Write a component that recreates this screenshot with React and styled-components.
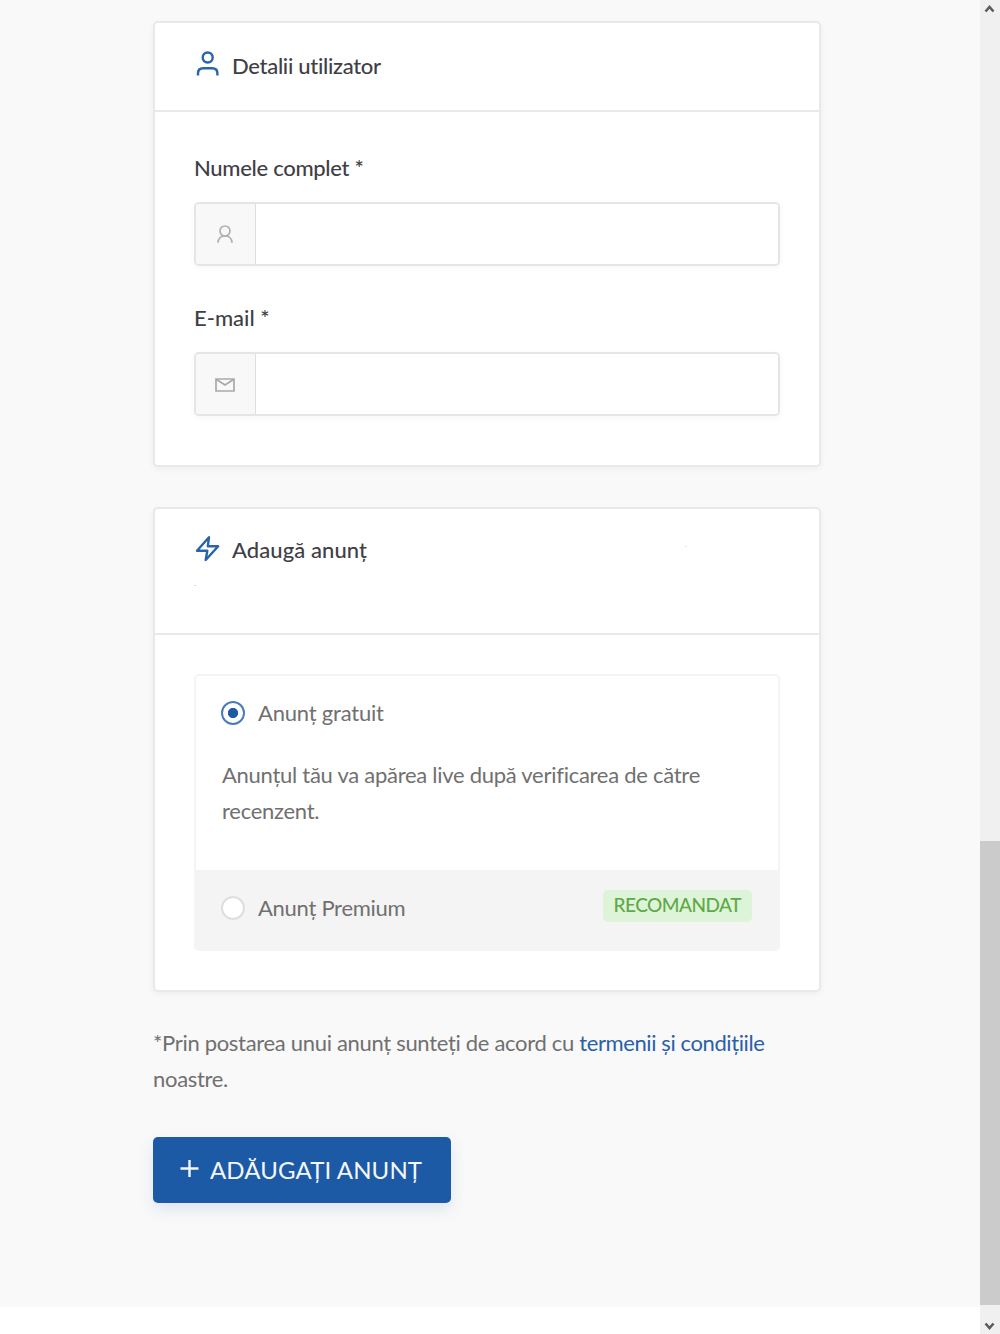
import { useState } from 'react';
import styled, { createGlobalStyle } from 'styled-components';

const GlobalStyle = createGlobalStyle`
  * {
    box-sizing: border-box;
  }

  body {
    margin: 0;
    background: #ffffff;
    color: #707070;
    font-family: Lato, 'Noto Sans', sans-serif;
    font-size: 22px;
    line-height: 36px;
    overflow: hidden;
  }
`;

const Window = styled.div`
  display: flex;
  height: 1334px;
`;

const Page = styled.main`
  flex: 1;
  height: 1307px;
  padding: 21px 159px 0 153px;
  background: #f9f9f9;
`;

const Card = styled.section`
  height: ${({ $height }) => $height}px;
  margin-bottom: ${({ $gap }) => $gap || 40}px;
  background: #ffffff;
  border: 2px solid #e9e9e9;
  border-radius: 5px;
  box-shadow: 0 2px 6px rgba(0, 0, 0, 0.05);
`;

const CardHeader = styled.header`
  position: relative;
  height: ${({ $height }) => $height}px;
  padding: ${({ $top }) => $top}px 39px 0;
  border-bottom: 2px solid #e9e9e9;
`;

const Heading = styled.h3`
  display: flex;
  align-items: center;
  gap: 10px;
  margin: 0;
  color: #3f3f46;
  font-size: 22px;
  font-weight: 500;
  letter-spacing: ${({ $spacing }) => $spacing || 0}px;
  line-height: 38px;

  svg {
    width: 28px;
    height: 28px;
    margin-bottom: 4px;
    stroke: #2a62ab;
  }
`;

const Speck = styled.i`
  position: absolute;
  left: ${({ $x }) => $x}px;
  top: ${({ $y }) => $y}px;
  width: 2px;
  height: 1px;
  background: ${({ $color }) => $color};
`;

const CardBody = styled.div`
  padding: ${({ $top }) => $top}px 39px 0;
`;

const Field = styled.label`
  display: block;
  margin-bottom: 34px;
`;

const FieldLabel = styled.span`
  display: block;
  margin-bottom: 16px;
  color: #3f3f46;
  font-weight: 500;
  letter-spacing: ${({ $spacing }) => $spacing || 0}px;
`;

const InputGroup = styled.span`
  display: flex;
  height: 64px;
  border: 2px solid #e5e5e5;
  border-radius: 5px;
  box-shadow: 0 2px 6px rgba(0, 0, 0, 0.04);
  overflow: hidden;
`;

const InputIcon = styled.span`
  display: flex;
  width: 60px;
  align-items: center;
  justify-content: center;
  padding-right: 2px;
  background: #f8f8f8;
  border-right: 1px solid #dedede;
`;

const Input = styled.input`
  flex: 1;
  min-width: 0;
  padding: 0 20px;
  background: #ffffff;
  border: none;
  outline: none;
  color: #707070;
  font: inherit;
`;

const Plans = styled.div`
  height: 277px;
  border: 2px solid #f4f4f4;
  border-radius: 5px;
  overflow: hidden;
`;

const Plan = styled.div`
  display: flex;
  flex-wrap: wrap;
  align-content: flex-start;
  align-items: flex-start;
  justify-content: space-between;
  height: ${({ $height }) => $height}px;
  padding: ${({ $muted }) => ($muted ? 20 : 19)}px 26px 0;
  background: ${({ $muted }) => ($muted ? '#f4f4f4' : '#ffffff')};
`;

const RadioLabel = styled.label`
  display: flex;
  align-items: center;
  gap: 13px;
  margin-left: -1px;
  letter-spacing: ${({ $spacing }) => $spacing || 0}px;
`;

const Radio = styled.input`
  appearance: none;
  width: 24px;
  height: 24px;
  margin: 0;
  background: #ffffff;
  border: 2px solid #dedede;
  border-radius: 50%;

  &:checked {
    background: radial-gradient(circle, #1d5aa5 4.7px, #ffffff 5.5px);
    border-color: #4a7cb8;
  }
`;

const PlanText = styled.p`
  width: 100%;
  margin: 26px 0 0;
  letter-spacing: -0.27px;
`;

const Badge = styled.span`
  height: 32px;
  padding: 0 11px;
  background: #def4d8;
  border-radius: 5px;
  color: #5fa948;
  font-size: 19px;
  font-weight: 500;
  letter-spacing: -0.5px;
  line-height: 30px;
`;

const Terms = styled.p`
  margin: 0 0 40px;
  letter-spacing: -0.31px;
`;

const TermsLink = styled.a`
  color: #2960a8;
  letter-spacing: -0.4px;
  text-decoration: none;
`;

const SubmitButton = styled.button`
  display: flex;
  width: 298px;
  height: 66px;
  align-items: center;
  padding: 0 27px 2px;
  gap: 10px;
  background: #1d5aa5;
  border: none;
  border-radius: 5px;
  box-shadow: 0 6px 16px rgba(29, 90, 165, 0.13);
  color: #f4f7fb;
  font-family: inherit;
  font-size: 24px;
  letter-spacing: 0.12px;
  white-space: nowrap;
  cursor: pointer;
`;

const Scrollbar = styled.div`
  display: flex;
  width: 20px;
  flex-direction: column;
  background: #f0f0f0;

  svg {
    flex: none;
  }
`;

const Thumb = styled.div`
  height: 464px;
  margin: 821px 0 auto;
  background: #cbcbcb;
`;

function UserIcon() {
  return (
    <svg viewBox="0 0 28 28" fill="none" strokeWidth="2.4">
      <circle cx="13.7" cy="7.5" r="5" />
      <path d="M4 25.500v-2.200c0-3.400 2-5 5.200-5h9c3.200 0 5.200 1.600 5.200 5v2.200" />
    </svg>
  );
}

function BoltIcon() {
  return (
    <svg viewBox="0 0 28 28" fill="none" strokeWidth="2.4" strokeLinejoin="round">
      <path d="M15 3.200 3 16.800h10.300l-1.600 9.200L24.200 12.300H13.800z" />
    </svg>
  );
}

function PersonIcon() {
  return (
    <svg width="20" height="20" viewBox="0 0 20 20" fill="none" stroke="#b0b0b4" strokeWidth="1.7">
      <ellipse cx="10" cy="7" rx="5" ry="5" />
      <path d="M3 18.800c.2-3.600 2-6.800 7-6.800s6.800 3.200 7 6.800" />
    </svg>
  );
}

function MailIcon() {
  return (
    <svg width="20" height="20" viewBox="0 0 20 20" fill="none" stroke="#a9a9ab" strokeWidth="1.7">
      <path d="M1 5h18v12H1z" />
      <path d="m1.500 5.500 8.500 5.500 8.500-5.500" />
    </svg>
  );
}

function Arrow({ d }) {
  return (
    <svg width="20" height="20" viewBox="0 0 20 20" fill="none" stroke="#5c5c5c" strokeWidth="2.6">
      <path d={d} />
    </svg>
  );
}

export default function App() {
  const [name, setName] = useState('');
  const [email, setEmail] = useState('');
  const [plan, setPlan] = useState('free');

  return (
    <Window>
      <GlobalStyle />
      <Page>
        <Card $height={446}>
          <CardHeader $height={89} $top={24}>
            <Heading $spacing={-0.3}>
              <UserIcon />
              Detalii utilizator
            </Heading>
          </CardHeader>
          <CardBody $top={38}>
            <Field>
              <FieldLabel $spacing={-0.3}>Numele complet *</FieldLabel>
              <InputGroup>
                <InputIcon><PersonIcon /></InputIcon>
                <Input value={name} onChange={e => setName(e.target.value)} />
              </InputGroup>
            </Field>
            <Field>
              <FieldLabel>E-mail *</FieldLabel>
              <InputGroup>
                <InputIcon><MailIcon /></InputIcon>
                <Input type="email" value={email} onChange={e => setEmail(e.target.value)} />
              </InputGroup>
            </Field>
          </CardBody>
        </Card>

        <Card $height={485} $gap={33}>
          <CardHeader $height={126} $top={22}>
            <Heading $spacing={0.08}>
              <BoltIcon />
              Adaugă anunț
            </Heading>
            <Speck $x={39} $y={76} $color="#f3d5b8" />
            <Speck $x={530} $y={37} $color="#e6e6e6" />
          </CardHeader>
          <CardBody $top={39}>
            <Plans>
              <Plan $height={194}>
                <RadioLabel $spacing={-0.2}>
                  <Radio type="radio" name="plan" checked={plan === 'free'} onChange={() => setPlan('free')} />
                  Anunț gratuit
                </RadioLabel>
                <PlanText>Anunțul tău va apărea live după verificarea de către recenzent.</PlanText>
              </Plan>
              <Plan $height={80} $muted>
                <RadioLabel $spacing={-0.27}>
                  <Radio type="radio" name="plan" checked={plan === 'premium'} onChange={() => setPlan('premium')} />
                  Anunț Premium
                </RadioLabel>
                <Badge>RECOMANDAT</Badge>
              </Plan>
            </Plans>
          </CardBody>
        </Card>

        <Terms>
          *Prin postarea unui anunț sunteți de acord cu <TermsLink href="#">termenii și condițiile</TermsLink> noastre.
        </Terms>
        <SubmitButton type="button">
          <svg width="20" height="20" viewBox="0 0 20 20" stroke="#f4f7fb" strokeWidth="2.4">
            <path d="M9.500 1v17M.5 9.500h18" />
          </svg>
          ADĂUGAȚI ANUNȚ
        </SubmitButton>
      </Page>
      <Scrollbar>
        <Arrow d="m5.500 11.500 4-4.500 4 4.500" />
        <Thumb />
        <Arrow d="m5.500 9.500 4 4.500 4-4.500" />
      </Scrollbar>
    </Window>
  );
}
